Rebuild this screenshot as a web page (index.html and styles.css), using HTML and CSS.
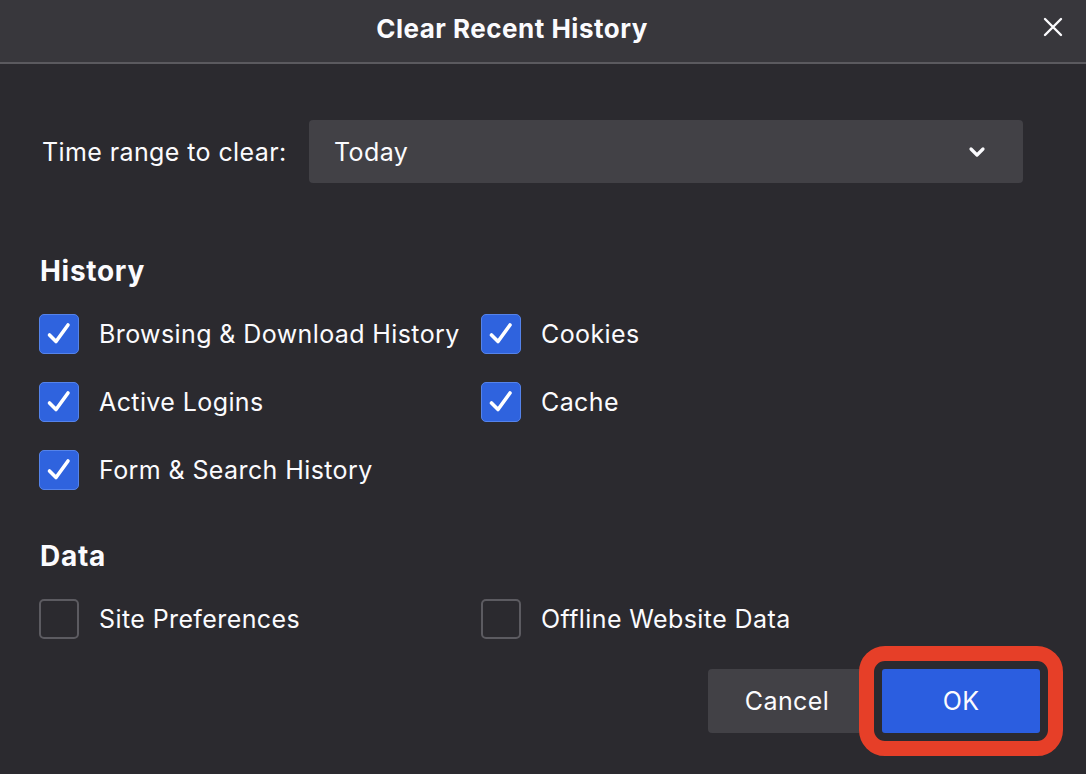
FILE: index.html
```html
<!DOCTYPE html>
<html lang="en">
  <head>
    <meta charset="UTF-8" />
    <meta name="viewport" content="width=device-width, initial-scale=1.0" />
    <title>Clear Recent History</title>
    <link rel="stylesheet" href="styles.css">
  </head>
  <body>
    <div class="dialog">
      <header class="titlebar">
        <span></span>
        <h1>Clear Recent History</h1>
        <button class="close" aria-label="Close">
          <svg width="20" height="20" viewBox="0 0 20 20">
            <path d="M2 2 L18 18 M18 2 L2 18" stroke="#fbfbfe" stroke-width="2.4" stroke-linecap="round" />
          </svg>
        </button>
      </header>

      <div class="content">
        <div class="range-row">
          <label class="range-label">Time range to clear:</label>
          <div class="select">
            <span>Today</span>
            <svg class="chevron" width="18" height="12" viewBox="0 0 18 12">
              <path d="M3 3 L9 9 L15 3" fill="none" stroke="#fbfbfe" stroke-width="3.2" stroke-linecap="round" stroke-linejoin="round" />
            </svg>
          </div>
        </div>

        <h2 class="section-title history-title">History</h2>
        <div class="options">
          <div class="option"><span class="box checked"></span>Browsing &amp; Download History</div>
          <div class="option"><span class="box checked"></span>Cookies</div>
          <div class="option"><span class="box checked"></span>Active Logins</div>
          <div class="option"><span class="box checked"></span>Cache</div>
          <div class="option"><span class="box checked"></span>Form &amp; Search History</div>
        </div>

        <h2 class="section-title data-title">Data</h2>
        <div class="options">
          <div class="option"><span class="box"></span>Site Preferences</div>
          <div class="option"><span class="box"></span>Offline Website Data</div>
        </div>

        <div class="actions">
          <button class="btn cancel">Cancel</button>
          <button class="btn ok">OK</button>
        </div>
      </div>
    </div>
  </body>
</html>
```

FILE: styles.css
```css
body {
  margin: 0;
  background: #2b2a2f;
  font-family: Inter, "Noto Sans", "DejaVu Sans", sans-serif;
  color: #fbfbfe;
}

.dialog {
  width: 1086px;
  height: 774px;
  background: #2b2a2f;
  overflow: hidden;
}

.titlebar {
  height: 62px;
  background: #38373c;
  border-bottom: 2px solid #5b5a5f;
  display: grid;
  grid-template-columns: 1fr auto 1fr;
  align-items: center;
}

.titlebar h1 {
  margin: 0;
  font-size: 26px;
  font-weight: 700;
  letter-spacing: 0.5px;
  padding: 0 62px 6px 0;
}

.close {
  justify-self: end;
  margin-right: 23px;
  margin-bottom: 8px;
  background: none;
  border: none;
  padding: 0;
  width: 20px;
  height: 20px;
  display: flex;
}

.content {
  padding: 56px 63px 0 39px;
}

.range-row {
  display: flex;
  align-items: center;
  height: 63px;
}

.range-label {
  width: 270px;
  padding-left: 3px;
  box-sizing: border-box;
  font-size: 25px;
  letter-spacing: 0.4px;
}

.select {
  flex: 1;
  height: 63px;
  background: #424146;
  border-radius: 4px;
  display: flex;
  align-items: center;
  justify-content: space-between;
  padding: 0 37px 0 25px;
  font-size: 25px;
  letter-spacing: 0.4px;
}

.section-title {
  margin: 0;
  font-size: 28px;
  line-height: 32px;
  font-weight: 700;
  letter-spacing: 0.7px;
  padding-left: 1px;
}

.history-title {
  margin-top: 72px;
}

.data-title {
  margin-top: 50px;
}

.options {
  display: grid;
  grid-template-columns: 442px auto;
  row-gap: 28px;
  margin-top: 27px;
}

.option {
  display: flex;
  align-items: center;
  height: 40px;
  font-size: 25px;
  letter-spacing: 0.4px;
}

.box {
  width: 40px;
  height: 40px;
  box-sizing: border-box;
  border-radius: 5px;
  border: 2px solid #5c5b61;
  margin-right: 20px;
  flex: none;
}

.box.checked {
  background-color: #2f63de;
  border: 1.5px solid #5583ea;
  background-image: url("data:image/svg+xml,%3Csvg xmlns='http://www.w3.org/2000/svg' width='40' height='40' viewBox='0 0 40 40'%3E%3Cpath d='M10.5 21 L17 27.5 L29 11' fill='none' stroke='white' stroke-width='3.6' stroke-linecap='round' stroke-linejoin='round'/%3E%3C/svg%3E");
  background-position: center;
}

.actions {
  display: flex;
  justify-content: flex-end;
  gap: 16px;
  margin-top: 30px;
  margin-right: -17px;
}

.btn {
  width: 158px;
  height: 64px;
  border: none;
  border-radius: 4px;
  font-family: inherit;
  font-size: 25px;
  letter-spacing: 0.4px;
  color: #fbfbfe;
  padding: 0;
}

.cancel {
  background: #424146;
}

.ok {
  position: relative;
  background: #2b5ee0;
  border-radius: 3px;
}

/* highlight ring drawn around the OK button */
.ok::after {
  content: "";
  position: absolute;
  inset: -23px;
  border: 15px solid #e63f28;
  border-radius: 26px;
  pointer-events: none;
}
```
